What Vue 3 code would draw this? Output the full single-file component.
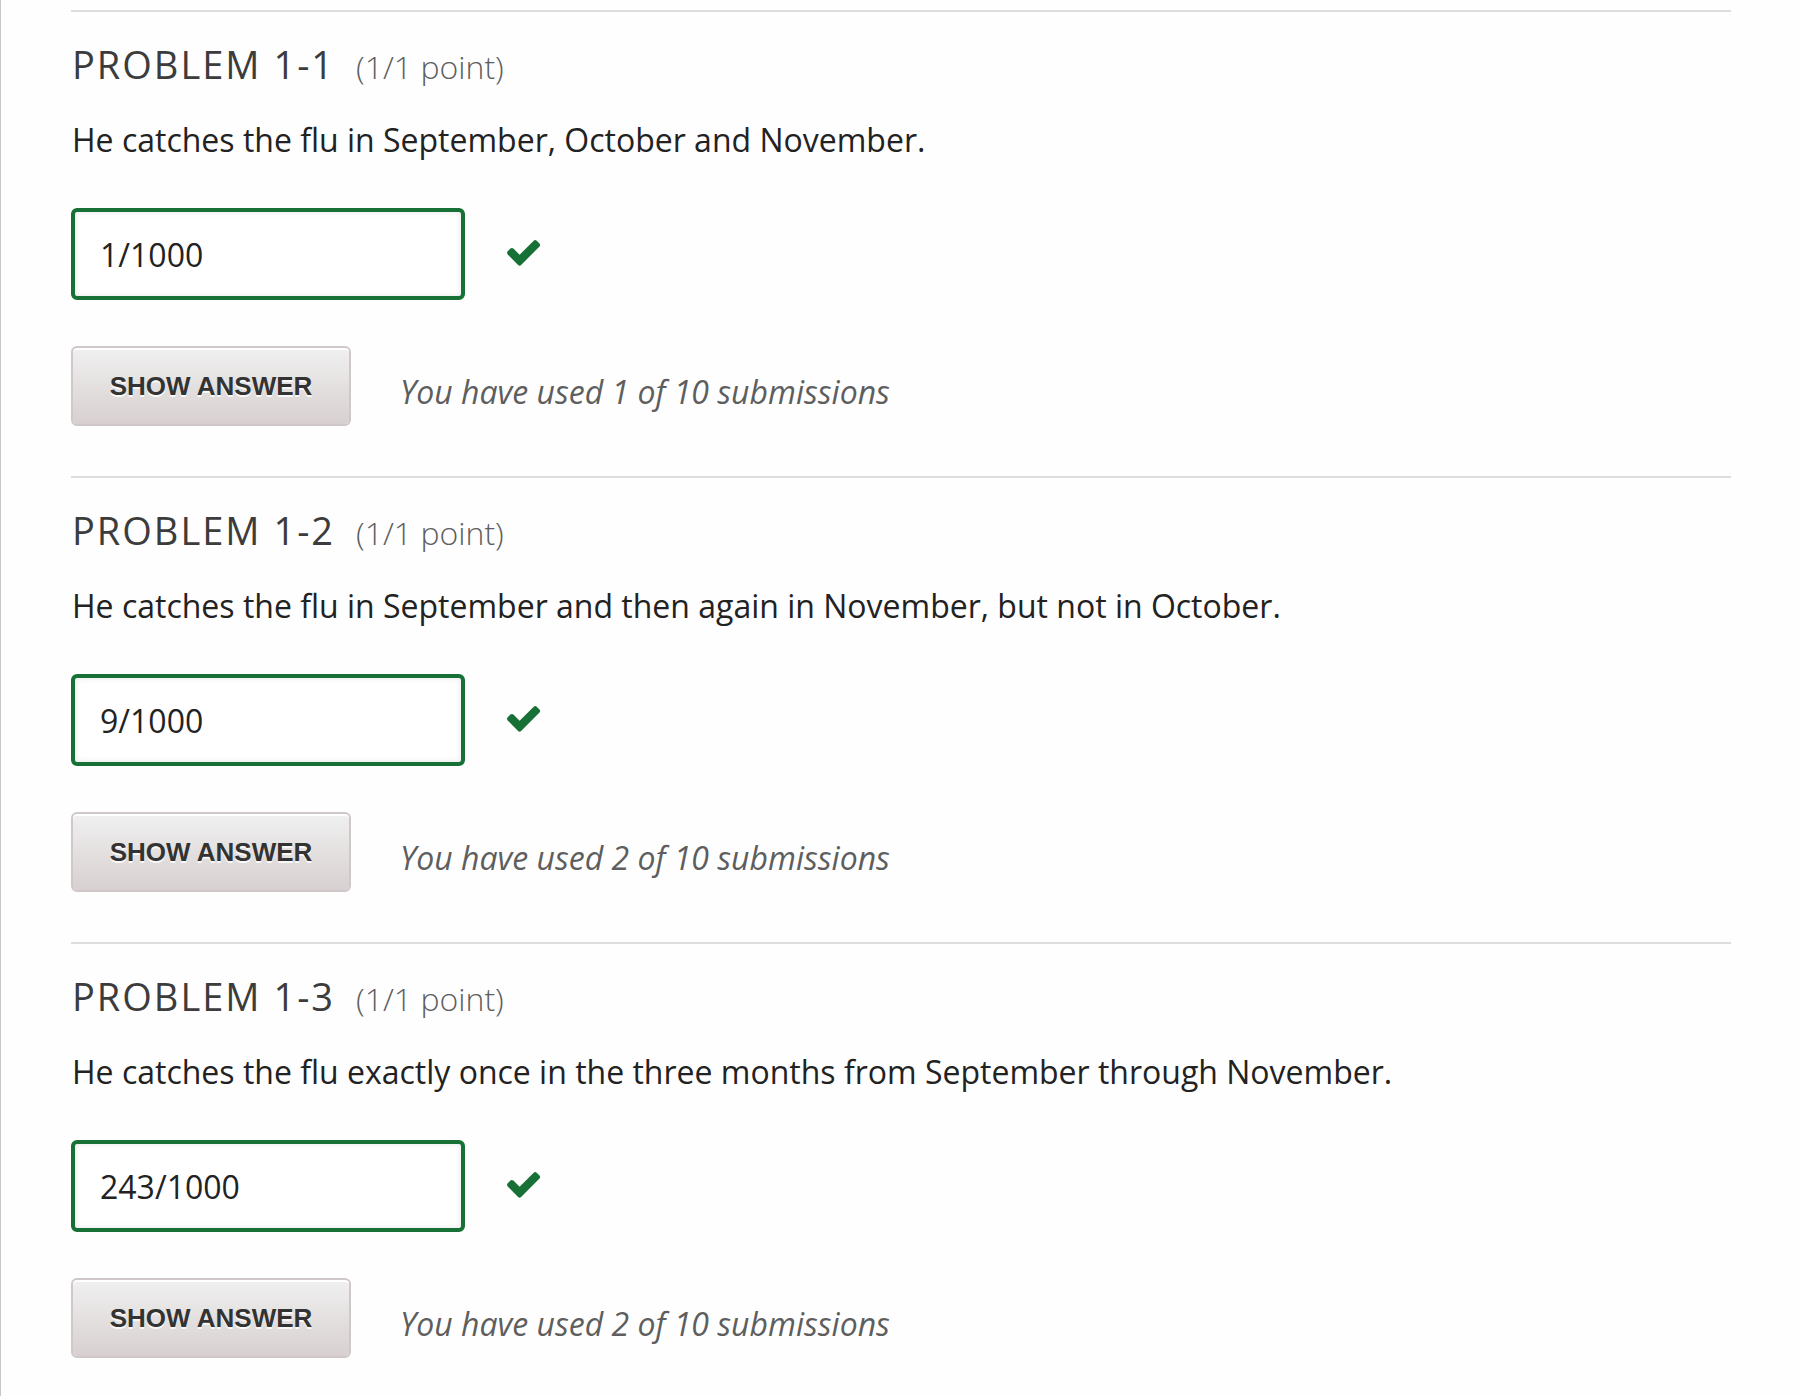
<script setup>
const problems = [
  { id: '1-1', text: 'He catches the flu in September, October and November.', answer: '1/1000', used: 1 },
  { id: '1-2', text: 'He catches the flu in September and then again in November, but not in October.', answer: '9/1000', used: 2 },
  { id: '1-3', text: 'He catches the flu exactly once in the three months from September through November.', answer: '243/1000', used: 2 },
]
</script>

<template>
  <main class="page">
    <section v-for="p in problems" :key="p.id" class="problem">
      <h2 class="title">PROBLEM {{ p.id }} <span class="points">(1/1 point)</span></h2>
      <label class="prompt" :for="'answer-' + p.id">{{ p.text }}</label>
      <div class="answer">
        <input :id="'answer-' + p.id" class="field" type="text" :value="p.answer" />
        <svg class="check" viewBox="0 0 34 26" role="img" aria-label="correct">
          <path d="M.7 11.200 3.400 8.600Q4.900 7.300 6.400 8.600L12.600 14.800 26.700.7Q28.200-.6 29.700.7L32.500 3.500Q33.800 5 32.500 6.500L14.100 25Q12.600 26.300 11.100 25L.7 14.500Q-.6 12.800.7 11.200Z" />
        </svg>
      </div>
      <div class="action">
        <button class="show" type="button">SHOW ANSWER</button>
        <p class="usage">You have used {{ p.used }} of 10 submissions</p>
      </div>
    </section>
  </main>
</template>

<style>
body {
  margin: 0;
  background: #fefefe;
}
</style>

<style scoped>
.page {
  border-left: 1px solid #c8c8c8;
  padding: 10px 70px 0;
  font-family: "Open Sans", sans-serif;
}
.problem {
  border-top: 2px solid #ddd;
  padding-bottom: 50px;
}
.title {
  margin: 0;
  padding: 24px 1px 0;
  font-size: 38px;
  line-height: 56px;
  font-weight: 400;
  letter-spacing: 2px;
  color: #3c3c3c;
}
.points {
  margin-left: 9px;
  font-size: 32px;
  font-weight: 300;
  letter-spacing: 0;
  color: #5e5e5e;
}
.prompt {
  display: block;
  margin-top: 21px;
  padding: 0 1px;
  font-size: 32px;
  line-height: 48px;
  color: #222;
}
.answer {
  display: flex;
  align-items: center;
  margin-top: 44px;
}
.field {
  box-sizing: border-box;
  width: 394px;
  height: 92px;
  padding: 0 25px;
  border: 4px solid #177036;
  border-radius: 6px;
  background: #fff;
  box-shadow: inset 0 0 6px rgba(0, 0, 0, 0.1);
  font: 32px "Open Sans", sans-serif;
  color: #222;
}
.check {
  width: 34px;
  height: 26px;
  margin: 0 0 2px 42px;
  fill: #177036;
}
.action {
  display: flex;
  align-items: center;
  margin-top: 46px;
}
.show {
  width: 280px;
  height: 80px;
  border: 2px solid #d0c8c8;
  border-radius: 6px;
  background: linear-gradient(#f0f0f0, #d8d0d0) padding-box;
  box-shadow: inset 0 2px 0 #fff;
  text-shadow: 0 2px 0 #f8f8f8;
  font: bold 26px "Liberation Sans", sans-serif;
  color: #333;
}
.usage {
  margin: 12px 0 0 49px;
  font-size: 32px;
  line-height: 48px;
  font-style: italic;
  color: #5e5e5e;
}
</style>
